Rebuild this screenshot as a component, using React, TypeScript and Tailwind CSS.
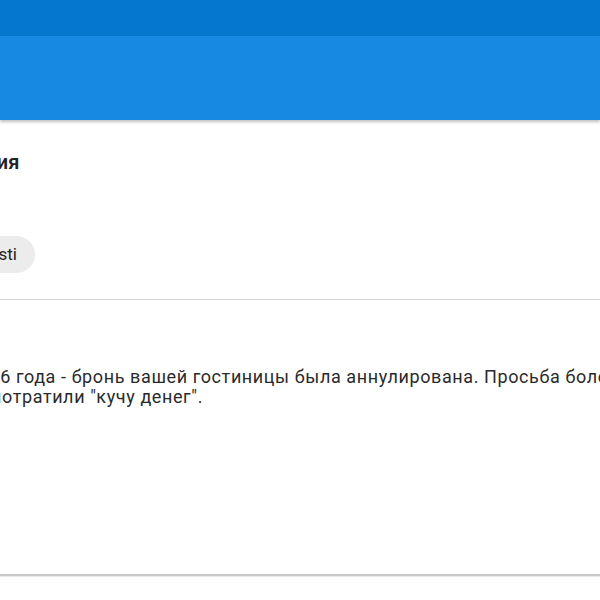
export default function App() {
  return (
    <div
      className="w-[600px] h-[600px] overflow-hidden bg-white flex flex-col"
      style={{ fontFamily: "Roboto, 'Noto Sans', sans-serif" }}
    >
      <div className="h-[36px] bg-[#0677ce] shrink-0" />
      <div className="h-[84px] bg-[#1789e2] shrink-0 shadow-[0_2px_3px_rgba(0,0,0,0.25)] relative z-10" />
      <div className="h-[180px] shrink-0 bg-white border-b border-[#d6d6d6] flex flex-col">
        <div className="mt-[30px] ml-[-110px] text-[20px] font-semibold text-[#222] leading-[24px] whitespace-nowrap">
          Уведомления
        </div>
        <div className="mt-[62px] ml-[-37px] flex">
          <span className="h-[37px] pl-[16px] pr-[18px] rounded-full bg-[#ececec] text-[17px] text-[#222] flex items-center whitespace-nowrap">
            Vesti
          </span>
        </div>
      </div>
      <div className="pt-[67px] text-[18px] leading-[20px] tracking-[0.6px] text-[#2a2a2a] whitespace-nowrap">
        <div className="ml-[-32px]">
          2016 года - бронь вашей гостиницы была аннулирована. Просьба более не беспокоиться.
        </div>
        <div className="ml-[-9px]">
          потратили "кучу денег".
        </div>
      </div>
      <div className="mt-auto mb-[24px] h-[2px] bg-[#c9c9c9] shadow-[0_1px_1px_rgba(0,0,0,0.1)]" />
    </div>
  );
}
